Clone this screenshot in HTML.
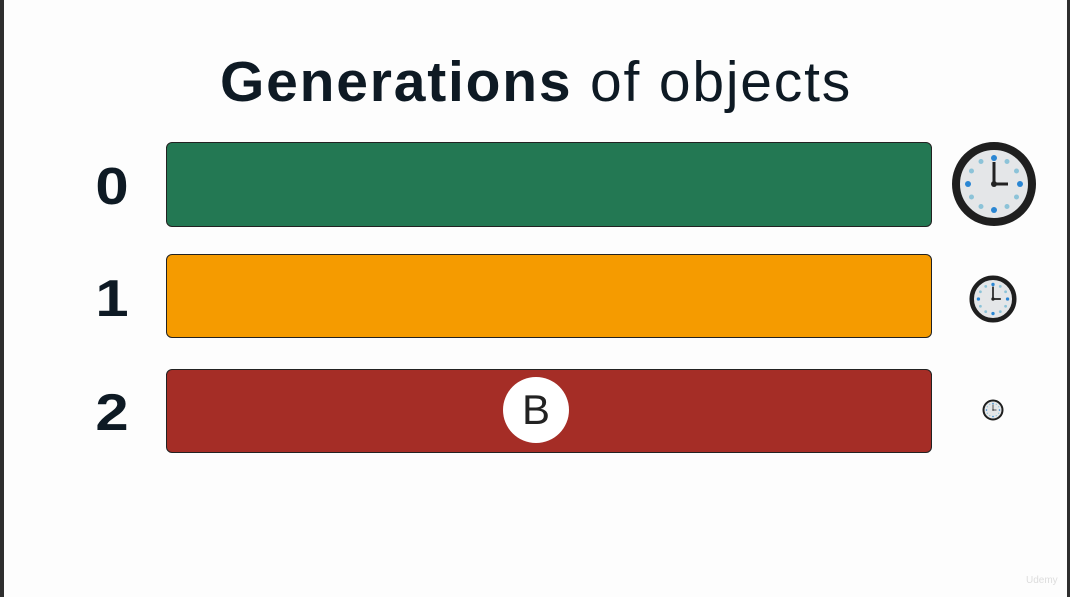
<!DOCTYPE html>
<html><head><style>
body{margin:0;width:1070px;height:597px;background:#fdfdfd;position:relative;overflow:hidden;font-family:"Liberation Sans",sans-serif;}
.lb{position:absolute;left:0;top:0;width:4px;height:597px;background:#2e2e2e}
.rb{position:absolute;left:1067px;top:0;width:3px;height:597px;background:#2e2e2e}
.t{position:absolute;left:220px;top:49px;font-size:57px;color:#0e1a24;white-space:nowrap;letter-spacing:1.8px}
.bar{position:absolute;left:166px;width:766px;border:1px solid #222;border-radius:6px;box-sizing:border-box}
.d{position:absolute;left:90px;width:44px;text-align:center;font-size:52px;font-weight:bold;color:#0e1a24;transform:scaleX(1.15)}
.b{position:absolute;left:503px;top:377px;width:66px;height:66px;border-radius:50%;background:#fff;text-align:center;line-height:66px;font-size:42px;color:#222}
.wm{position:absolute;left:1026px;top:575px;font-size:10px;color:#ddd}
</style></head><body>
<div class="lb"></div><div class="rb"></div>
<div class="t"><b>Generations</b> of objects</div>
<div class="d" style="top:157px">0</div>
<div class="d" style="top:269px">1</div>
<div class="d" style="top:383px">2</div>
<div class="bar" style="top:142px;height:85px;background:#237853"></div>
<div class="bar" style="top:254px;height:84px;background:#f59b00"></div>
<div class="bar" style="top:369px;height:84px;background:#a52d26"></div>
<div class="b">B</div>
<svg style="position:absolute;left:0;top:0" width="1070" height="597">
<defs><g id="c">
<circle r="38" fill="#e4e6e8" stroke="#1f1f1f" stroke-width="8"/>
<circle r="3" cy="-26" fill="#2a86d3"/><circle r="3" cy="26" fill="#2a86d3"/>
<circle r="3" cx="-26" fill="#2a86d3"/><circle r="3" cx="26" fill="#2a86d3"/>
<g fill="#8cc3d8"><circle r="2.5" cx="13" cy="-22.5"/><circle r="2.5" cx="22.5" cy="-13"/><circle r="2.5" cx="22.5" cy="13"/><circle r="2.5" cx="13" cy="22.5"/><circle r="2.5" cx="-13" cy="22.5"/><circle r="2.5" cx="-22.5" cy="13"/><circle r="2.5" cx="-22.5" cy="-13"/><circle r="2.5" cx="-13" cy="-22.5"/></g>
<path d="M0 0V-22M0 0H14" stroke="#222" stroke-width="3"/><circle r="3" fill="#222"/>
</g></defs>
<use href="#c" transform="translate(994,184)"/>
<use href="#c" transform="translate(993,299) scale(0.56)"/>
<use href="#c" transform="translate(993,410) scale(0.25)"/>
</svg>
<div class="wm">Udemy</div>
</body></html>
